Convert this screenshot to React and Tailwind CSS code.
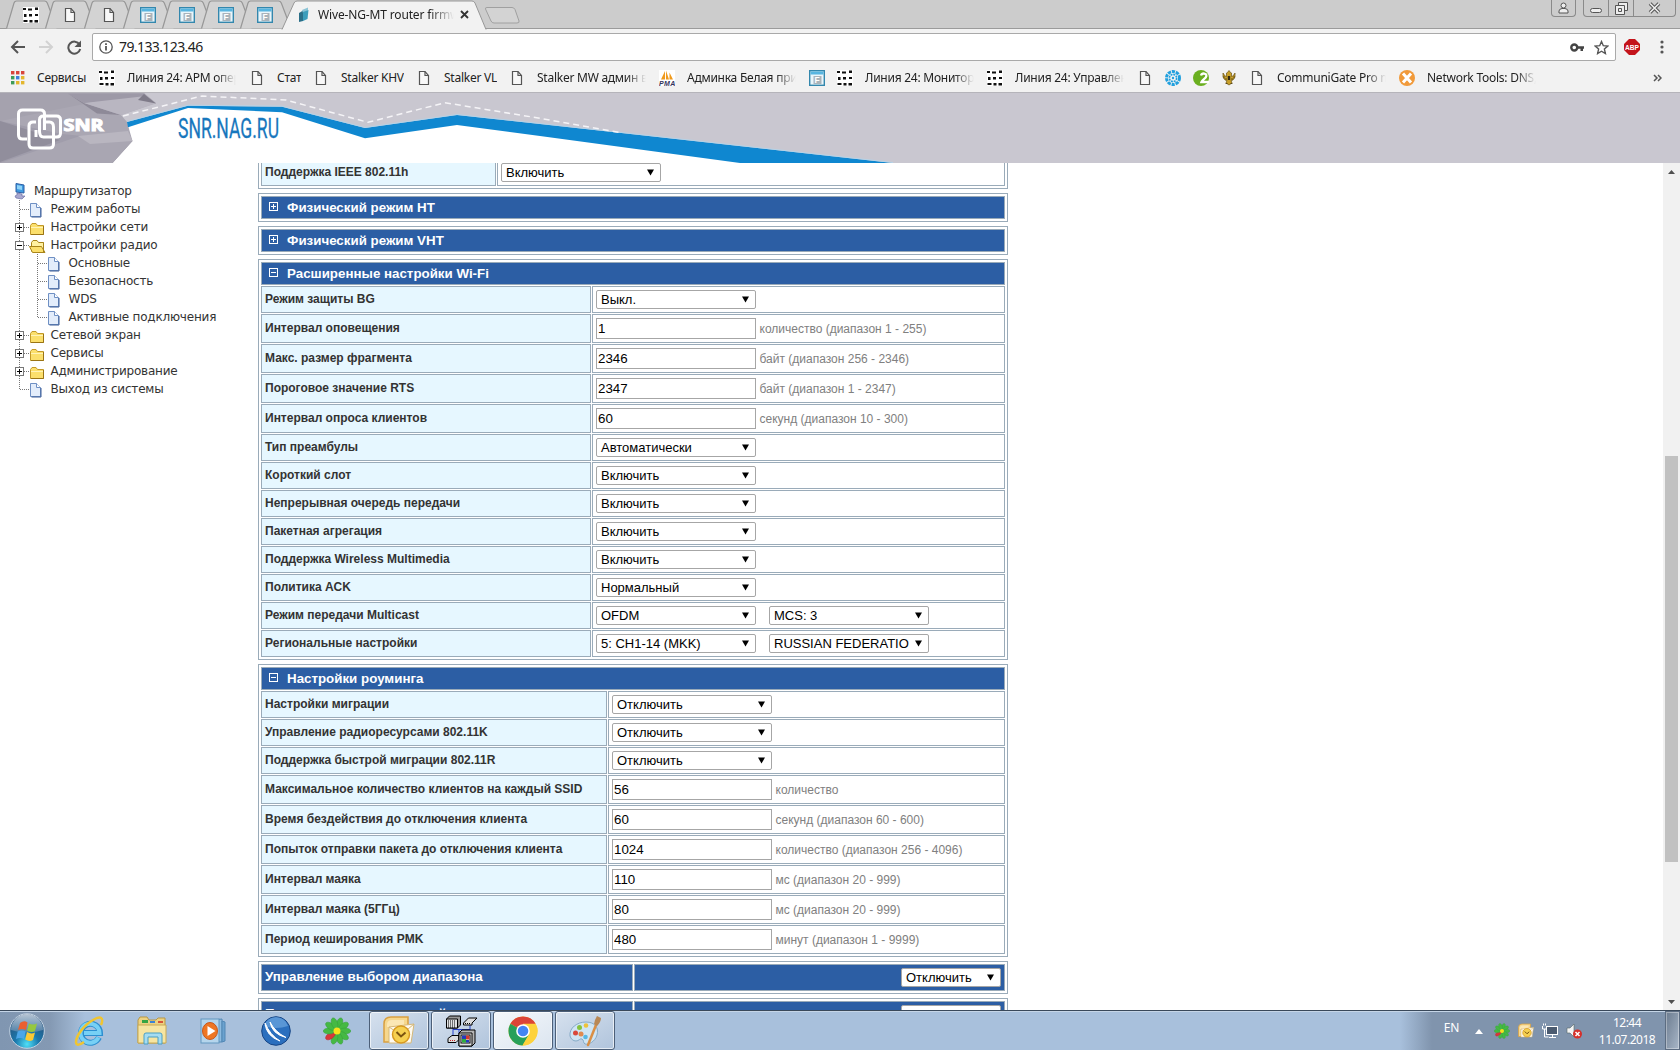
import { useState } from 'react';

const BOOKMARKS = [
  { icon: 'apps', label: 'Сервисы', width: 'w-[90px]' },
  { icon: 'dots', label: 'Линия 24: АРМ операт', width: 'w-[150px]', fade: true },
  { icon: 'page', label: 'Стат', width: 'w-[64px]' },
  { icon: 'page', label: 'Stalker KHV', width: 'w-[103px]' },
  { icon: 'page', label: 'Stalker VL', width: 'w-[93px]' },
  { icon: 'page', label: 'Stalker MW админ вх', width: 'w-[150px]', fade: true },
  { icon: 'pma', label: 'Админка Белая прив', width: 'w-[150px]', fade: true },
  { icon: 'form', width: 'w-[28px]' },
  { icon: 'dots', label: 'Линия 24: Монитори', width: 'w-[150px]', fade: true },
  { icon: 'dots', label: 'Линия 24: Управлени', width: 'w-[150px]', fade: true },
  { icon: 'page', width: 'w-[28px]' },
  { icon: 'blue', width: 'w-[28px]' },
  { icon: 'green', width: 'w-[28px]' },
  { icon: 'eagle', width: 'w-[28px]' },
  { icon: 'page', label: 'CommuniGate Pro ma', width: 'w-[150px]', fade: true },
  { icon: 'orange', label: 'Network Tools: DNS,I', width: 'w-[150px]', fade: true },
];

const TREE = [
  { label: 'Режим работы', level: 1, icon: 'page' },
  { label: 'Настройки сети', level: 1, icon: 'folder', toggle: '+' },
  { label: 'Настройки радио', level: 1, icon: 'open', toggle: '-' },
  { label: 'Основные', level: 2, icon: 'page' },
  { label: 'Безопасность', level: 2, icon: 'page' },
  { label: 'WDS', level: 2, icon: 'page' },
  { label: 'Активные подключения', level: 2, icon: 'page', last: true },
  { label: 'Сетевой экран', level: 1, icon: 'folder', toggle: '+' },
  { label: 'Сервисы', level: 1, icon: 'folder', toggle: '+' },
  { label: 'Администрирование', level: 1, icon: 'folder', toggle: '+' },
  { label: 'Выход из системы', level: 1, icon: 'page', last: true },
];

const WIFI_ROWS = [
  { label: 'Режим защиты BG', selects: ['Выкл.'] },
  { label: 'Интервал оповещения', value: '1', hint: 'количество (диапазон 1 - 255)' },
  { label: 'Макс. размер фрагмента', value: '2346', hint: 'байт (диапазон 256 - 2346)' },
  { label: 'Пороговое значение RTS', value: '2347', hint: 'байт (диапазон 1 - 2347)' },
  { label: 'Интервал опроса клиентов', value: '60', hint: 'секунд (диапазон 10 - 300)' },
  { label: 'Тип преамбулы', selects: ['Автоматически'] },
  { label: 'Короткий слот', selects: ['Включить'] },
  { label: 'Непрерывная очередь передачи', selects: ['Включить'] },
  { label: 'Пакетная агрегация', selects: ['Включить'] },
  { label: 'Поддержка Wireless Multimedia', selects: ['Включить'] },
  { label: 'Политика ACK', selects: ['Нормальный'] },
  { label: 'Режим передачи Multicast', selects: ['OFDM', 'MCS: 3'] },
  { label: 'Региональные настройки', selects: ['5: CH1-14 (MKK)', 'RUSSIAN FEDERATIO'] },
];

const ROAMING_ROWS = [
  { label: 'Настройки миграции', selects: ['Отключить'] },
  { label: 'Управление радиоресурсами 802.11K', selects: ['Отключить'] },
  { label: 'Поддержка быстрой миграции 802.11R', selects: ['Отключить'] },
  { label: 'Максимальное количество клиентов на каждый SSID', value: '56', hint: 'количество' },
  { label: 'Время бездействия до отключения клиента', value: '60', hint: 'секунд (диапазон 60 - 600)' },
  { label: 'Попыток отправки пакета до отключения клиента', value: '1024', hint: 'количество (диапазон 256 - 4096)' },
  { label: 'Интервал маяка', value: '110', hint: 'мс (диапазон 20 - 999)' },
  { label: 'Интервал маяка (5ГГц)', value: '80', hint: 'мс (диапазон 20 - 999)' },
  { label: 'Период кеширования PMK', value: '480', hint: 'минут (диапазон 1 - 9999)' },
];

/* ---------- Small icons ---------- */

const PageIcon = () => (
  <svg width="16" height="16" viewBox="0 0 16 16" fill="#f8f8f8" stroke="#555" strokeWidth="1.2">
    <path d="M3.500 1.500h5.500l3.500 4v9h-9z" />
    <path d="M9 1.500v4h3.500" fill="none" />
  </svg>
);

const DotsIcon = () => (
  <svg width="16" height="16" viewBox="0 0 16 16">
    <rect width="16" height="16" fill="#fff" />
    <g fill="#111">
      <rect x="0" y="1" width="3" height="2" /><rect x="5" y="1.5" width="4" height="2" /><rect x="12" y="0.5" width="3" height="2.5" />
      <rect x="1" y="7" width="2.5" height="3" /><rect x="6" y="7" width="3" height="2.5" /><rect x="12" y="7" width="3" height="2" />
      <rect x="0.5" y="13" width="4" height="2" /><rect x="6.5" y="13" width="3" height="2.5" /><rect x="11.5" y="13" width="3.5" height="2.5" />
    </g>
  </svg>
);

const FormIcon = () => (
  <svg width="16" height="16" viewBox="0 0 16 16">
    <rect x="0.7" y="0.7" width="14.6" height="14.6" fill="#e9f5fb" stroke="#3387ad" strokeWidth="1.4" />
    <rect x="1.5" y="1.5" width="13" height="3" fill="#58b5e0" />
    <rect x="4.5" y="6" width="8" height="8" fill="#a9b3ba" />
    <text x="5.6" y="13" fontSize="8.5" fontWeight="700" fill="#fff" fontFamily="Liberation Sans, sans-serif">F</text>
  </svg>
);

const BookmarkIcon = ({ name }) => {
  if (name === 'page') return <PageIcon />;
  if (name === 'dots') return <DotsIcon />;
  if (name === 'form') return <FormIcon />;
  if (name === 'apps') {
    const colors = ['#d8443a', '#d8443a', '#d8443a', '#3d9b57', '#3f7fdc', '#e3b62d', '#3d9b57', '#e3b62d', '#e3b62d'];
    return (
      <svg width="16" height="16" viewBox="0 0 16 16">
        {colors.map((c, i) => (
          <rect key={i} x={2 + (i % 3) * 5} y={1 + Math.floor(i / 3) * 5} width="3.4" height="3.4" fill={c} />
        ))}
      </svg>
    );
  }
  if (name === 'pma') {
    return (
      <svg width="16" height="16" viewBox="0 0 16 16">
        <rect width="16" height="16" fill="#fff" />
        <path d="M2 9.5L6 1v8.5zM7 9.5V0.5l3 9zM10.5 9.5V2.5L14 9.5z" fill="#f09a1c" />
        <text x="0" y="16" fontSize="7" fontWeight="700" fontStyle="italic" fill="#33335c" textLength="16" fontFamily="Liberation Sans, sans-serif">PMA</text>
      </svg>
    );
  }
  if (name === 'blue') {
    return (
      <svg width="16" height="16" viewBox="0 0 16 16" fill="none" stroke="#22a0de">
        <circle cx="8" cy="8" r="6.5" strokeWidth="3" strokeDasharray="3.2 0.9" />
        <circle cx="8" cy="8" r="3.6" strokeWidth="1.6" strokeDasharray="2 0.8" />
        <circle cx="8" cy="8" r="1.2" fill="#22a0de" stroke="none" />
      </svg>
    );
  }
  if (name === 'green') {
    return (
      <svg width="16" height="16" viewBox="0 0 16 16">
        <circle cx="8" cy="8" r="8" fill="#6aaf1f" />
        <path d="M8 5.500C9 2.500 14 3 13.300 6.200C12.800 8.500 9.500 9.500 8.500 12H16" fill="none" stroke="#fff" strokeWidth="2.300" />
      </svg>
    );
  }
  if (name === 'eagle') {
    return (
      <svg width="16" height="16" viewBox="0 0 16 16">
        <path d="M2 3v4l2 3 2 0.500-1 2.500 3 2 3-2-1-2.500 2-0.500 2-3V3l-2 3-1.500 0.500L10.500 3 9.500 2.500 8 0.500 6.500 2.500 5.500 3l0 3.500L4 6z" fill="#c9a029" stroke="#6b5413" strokeWidth="0.700" />
        <path d="M3 6v2.500M13 6v2.500M5 8v2M11 8v2M4.500 13.500h2M9.500 13.500h2" stroke="#4c3b0d" strokeWidth="0.800" />
        <rect x="6.800" y="6" width="2.400" height="4" fill="#302812" />
      </svg>
    );
  }
  return (
    <svg width="16" height="16" viewBox="0 0 16 16">
      <circle cx="8" cy="8" r="8" fill="#f19a3a" />
      <path d="M4 3.6l8 8.8M12 3.6l-8 8.8" stroke="#fff" strokeWidth="3" />
    </svg>
  );
};

const TabShape = () => (
  <svg className="absolute left-0 top-0" width="52" height="29" viewBox="0 0 52 29">
    <path d="M0.500 28.500L8 3Q8.700 1 10.500 1H38.500Q40.500 1 41.300 3L51 28.500" fill="#d3d3d3" stroke="#979797" strokeWidth="1.200" />
  </svg>
);

/* ---------- Browser chrome ---------- */

const TabStrip = () => (
  <div className="flex h-[29px] shrink-0 items-start bg-[#cccccc] border-b border-[#9b9b9b] pl-[6px]">
    {['dots', 'page', 'page', 'form', 'form', 'form', 'form'].map((icon, i) => (
      <div key={i} className="relative h-[28px] w-[39px]">
        <TabShape />
        <div className="relative pl-[17px] pt-[7px]"><BookmarkIcon name={icon} /></div>
      </div>
    ))}
    <div className="relative flex h-[29px] w-[206px] items-center pl-[19px]">
      <svg className="absolute left-0 top-0" width="210" height="30" viewBox="0 0 210 30">
        <path d="M3 29.500L15 3Q16 1 18 1H193Q195 1 196 3L207 29.500" fill="#f2f2f2" stroke="#979797" />
      </svg>
      <svg className="relative" width="12" height="16" viewBox="0 0 12 16">
        <path d="M1 6l5-3v3l-1 8-4 1z" fill="#2b6f88" />
        <path d="M4 3l6-2.500v3L5 6z" fill="#8cc4d6" />
        <path d="M5 5l5.500-2-1 9-4.500 2z" fill="#3c9dbb" />
      </svg>
      <span className="relative ml-[8px] w-[136px] overflow-hidden whitespace-nowrap text-[12px] tracking-[-0.15px] text-[#222] [mask-image:linear-gradient(90deg,#000_82%,transparent)]">Wive-NG-MT router firmware</span>
      <svg className="relative ml-[6px]" width="9" height="9" viewBox="0 0 9 9" stroke="#333" strokeWidth="1.800">
        <path d="M1 1l7 7M8 1l-7 7" />
      </svg>
    </div>
    <svg className="mt-[7px] -ml-[1px]" width="36" height="17" viewBox="0 0 36 17">
      <path d="M3 0.500H28Q30 0.500 31 2.500L35 14Q35.500 16 33 16H10Q8 16 7 14L1.500 2Q1 0.500 3 0.500z" fill="#d3d3d3" stroke="#a0a0a0" />
    </svg>
    <div className="ml-auto mr-[4px] flex gap-[7px]">
      <div className="flex h-[17px] w-[25px] items-center justify-center rounded-b border border-t-0 border-[#8a8a8a]">
        <svg width="11" height="12" viewBox="0 0 11 12" fill="#eee" stroke="#555">
          <circle cx="5.500" cy="3.500" r="2.500" />
          <path d="M1 11V9q0-2 3-2.500h3q3 0.500 3 2.500v2z" />
        </svg>
      </div>
      <div className="flex h-[17px] w-[93px] rounded-b border border-t-0 border-[#8a8a8a]">
        <div className="flex w-[25px] items-center justify-center border-r border-[#8a8a8a]">
          <div className="mt-1 h-[5px] w-[12px] rounded-sm border border-[#555] bg-[#eee]" />
        </div>
        <div className="flex w-[25px] items-center justify-center border-r border-[#8a8a8a]">
          <svg width="13" height="13" viewBox="0 0 13 13" fill="#eee" stroke="#555">
            <path d="M3.500 0.500h9v8h-9z" /><path d="M0.500 3.500h9v9h-9z" /><path d="M3.500 6.500h3v3h-3z" />
          </svg>
        </div>
        <div className="flex flex-1 items-center justify-center">
          <svg width="13" height="12" viewBox="0 0 13 12">
            <path d="M2 1.500l9 9M11 1.500l-9 9" stroke="#555" strokeWidth="3.600" />
            <path d="M2 1.500l9 9M11 1.500l-9 9" stroke="#eee" strokeWidth="1.600" />
          </svg>
        </div>
      </div>
    </div>
  </div>
);

const Toolbar = () => (
  <div className="flex h-[35px] shrink-0 items-center bg-[#f2f2f2] pl-[10px] pt-[1px]">
    <svg width="16" height="14" viewBox="0 0 16 14" fill="none" stroke="#555" strokeWidth="2">
      <path d="M15 7H2M8 1L2 7l6 6" />
    </svg>
    <svg className="ml-[12px]" width="16" height="14" viewBox="0 0 16 14" fill="none" stroke="#d2d2d2" strokeWidth="2">
      <path d="M1 7h13M8 1l6 6-6 6" />
    </svg>
    <svg className="ml-[13px]" width="15" height="15" viewBox="0 0 15 15">
      <path d="M12.500 4.500A6 6 0 1 0 13.200 9" fill="none" stroke="#555" strokeWidth="2" />
      <path d="M14 0.500v6.500H7.500z" fill="#555" />
    </svg>
    <div className="ml-[10px] flex h-[28px] w-[1524px] items-center rounded-[2px] border border-[#a9a9a9] bg-white pl-[6px]">
      <svg width="14" height="14" viewBox="0 0 14 14" fill="none" stroke="#555" strokeWidth="1.300">
        <circle cx="7" cy="7" r="6.200" />
        <path d="M7 6v4.500M7 3.300v1.600" strokeWidth="1.800" />
      </svg>
      <span className="-mt-px ml-[6px] text-[14px] tracking-[-0.6px] text-[#222]">79.133.123.46</span>
      <svg className="ml-auto" width="14" height="9" viewBox="0 0 14 9">
        <circle cx="4.300" cy="4.500" r="3" fill="none" stroke="#444" strokeWidth="2.400" />
        <path d="M7.500 3.200H14v2.600h-1V8h-2.500V5.800h-3z" fill="#444" />
      </svg>
      <svg className="ml-[10px] mr-[6px]" width="15" height="15" viewBox="0 0 15 15" fill="none" stroke="#555" strokeWidth="1.400">
        <path d="M7.500 1.500l1.800 4.200 4.500 0.400-3.400 3 1 4.400-3.900-2.300-3.900 2.300 1-4.400-3.400-3 4.500-0.400z" />
      </svg>
    </div>
    <svg className="ml-[8px]" width="16" height="16" viewBox="0 0 16 16">
      <path d="M5 0h6l5 5v6l-5 5H5l-5-5V5z" fill="#c4141b" />
      <text x="1" y="11" fontSize="8" fontWeight="700" fill="#fff" textLength="14" lengthAdjust="spacingAndGlyphs" fontFamily="Liberation Sans, sans-serif">ABP</text>
    </svg>
    <svg className="ml-[20px]" width="4" height="14" viewBox="0 0 4 14" fill="#555">
      <circle cx="2" cy="2" r="1.600" /><circle cx="2" cy="7" r="1.600" /><circle cx="2" cy="12" r="1.600" />
    </svg>
  </div>
);

const BookmarksBar = () => (
  <div className="flex h-[29px] shrink-0 items-center border-b border-[#b5b4ba] bg-[#f2f2f2] pl-[9px] text-[12px] tracking-[-0.25px] text-[#222]">
    {BOOKMARKS.map((b, i) => (
      <div key={i} className={`flex shrink-0 items-center ${b.width}`}>
        <BookmarkIcon name={b.icon} />
        {b.label && (
          <span className={`ml-[12px] overflow-hidden whitespace-nowrap ${b.fade ? 'w-[109px] [mask-image:linear-gradient(90deg,#000_82%,transparent)]' : ''}`}>
            {b.label}
          </span>
        )}
      </div>
    ))}
    <svg className="ml-auto mr-[18px]" width="9" height="8" viewBox="0 0 9 8" fill="none" stroke="#555" strokeWidth="1.500">
      <path d="M1 1l3 3-3 3M5 1l3 3-3 3" />
    </svg>
  </div>
);

/* ---------- Router page ---------- */

const Banner = () => (
  <svg className="block shrink-0" width="1680" height="70" viewBox="0 93 1680 70">
    <rect x="0" y="93" width="1680" height="70" fill="#c9c7d0" />
    <path d="M112 163L132 141L127 125L188 107L282 110L365 133L457 120L540 130L815 163z" fill="#fff" />
    <path d="M0 93H144L156 103L121 115L127 122L132.500 141L112.500 163H0z" fill="#aaa7b3" />
    <path d="M0 93H68L84 104L0 121z" fill="#a5a2ae" />
    <path d="M68 93.500L84 103L121 115L97 113.500z" fill="#8e8a98" />
    <path d="M84 103L144 93.500L156 103.500L121 115z" fill="#b9b6c1" />
    <path d="M68 93.500H144L146 96L84 103z" fill="#9d99a7" />
    <path d="M144 94L156 103.500L138 100z" fill="#7f7b89" />
    <path d="M0 121L62 134L132 141L112.500 163H0z" fill="#a09dab" />
    <path d="M0 163L80 136L132.500 141L112.500 163z" fill="#a9a6b2" />
    <path d="M0 121L60 140L0 162z" fill="#918e9c" />
    <path d="M78 136L128 131L132.500 141L90 144z" fill="#b9b6c0" />
    <path d="M127 122L188 105.700L282 106.700L365 128L457 115L540 124L893 163H740L540 136L457 125L365 138.300L282 112.300L188 108L128 127.300z" fill="#0f87d0" />
    <path d="M127 121.500L188 105.200L282 106.200L365 127.500L457 114.500L540 123.500L893 162.500" fill="none" stroke="#b5d3e8" strokeWidth="1" />
    <path d="M123 116L202 96L286 100L368 122.300L445 102.700L540 118.300L619 132.300" fill="none" stroke="#f5f4f7" strokeWidth="1.500" strokeDasharray="6 4" />
    <g fill="none" stroke="#fff" strokeWidth="3">
      <path d="M27 139H22.500Q18.500 139 18.500 135V114Q18.500 110 22.500 110H40.500Q44.500 110 44.500 114V130" />
      <path d="M29 139V144Q29 148 33 148H49.500Q53.500 148 53.500 144V127Q53.500 122 49.500 122H44M36 122H33Q29 122 29 126V139" />
      <path d="M36 137V130M39.500 131V120Q39.500 116 43.500 116H56.500Q60.500 116 60.500 120V133Q60.500 137 56.500 137H43.500Q39.500 137 39.500 131" />
    </g>
    <text x="63.500" y="131" fontSize="15.500" fontWeight="700" fill="#fff" stroke="#fff" strokeWidth="1.100" textLength="40" lengthAdjust="spacingAndGlyphs" fontFamily="Open Sans, sans-serif">SNR</text>
    <text x="178" y="138" fontSize="28" fill="#1777bd" stroke="#1777bd" strokeWidth="0.300" textLength="101" lengthAdjust="spacingAndGlyphs" fontFamily="Roboto, sans-serif">SNR.NAG.RU</text>
  </svg>
);

const NodeIcon = ({ name }) => (
  <svg width="18" height="18" viewBox="0 0 18 18">
    {name === 'page' && (
      <g stroke="#6f90c4">
        <path d="M1.500 3.500h6l4 4v9h-10z" fill="#e3edfb" />
        <path d="M7.500 3.500v4h4" fill="#fff" />
        <path d="M12 8v9H2.500" stroke="#3e5f97" fill="none" />
      </g>
    )}
    {name === 'folder' && (
      <g stroke="#c39a2a">
        <path d="M1.500 7.500l1.500-2h4l1.500 2h6v9h-13z" fill="#fbdf6c" />
        <path d="M2 9.500h12" stroke="#fff3b8" />
        <path d="M2 16.500h12.500V8" stroke="#9a7415" fill="none" />
      </g>
    )}
    {name === 'open' && (
      <g stroke="#a88419">
        <path d="M2.500 15.500V6.500l1.500-2h4l1.500 2h5v4" fill="#fff1a0" />
        <path d="M0.500 10.500h12l3.500 6h-12.500z" fill="#fbdf6c" />
        <path d="M14.500 6.500v10" fill="none" />
      </g>
    )}
    {name === 'root' && (
      <g>
        <path d="M5 1.500l8 1.500v8L5 10z" fill="#3f9ae0" stroke="#2b5ea5" />
        <path d="M6 3l5 1v4l-5-1z" fill="#8fd3f8" />
        <path d="M6 11l5 1v2h3l-3 3-6-1-1-2 2-1z" fill="#a9a8cf" stroke="#6c6fa5" strokeWidth="0.700" />
      </g>
    )}
  </svg>
);

const JoinLine = ({ toggle, last, straight }) => (
  <svg width="18" height="18" viewBox="0 0 18 18" fill="none" stroke="#777">
    <path d={last ? 'M8.500 0v10' : 'M8.500 0v18'} strokeDasharray="1 1" />
    {!straight && <path d="M9 9.500h9" strokeDasharray="1 1" />}
    {toggle && (
      <g>
        <rect x="4.500" y="5.500" width="8" height="8" fill="#fff" stroke="#777" />
        <path d={toggle === '+' ? 'M6 9.500h5M8.500 7v5' : 'M6 9.500h5'} stroke="#000" />
      </g>
    )}
  </svg>
);

const Sidebar = () => (
  <div className="w-[258px] shrink-0 pl-[11px] pt-[19px] font-['DejaVu_Sans',sans-serif] text-[12px] tracking-[-0.2px] text-[#333]">
    <div className="flex h-[18px] items-center">
      <NodeIcon name="root" />
      <span className="ml-[5px] whitespace-nowrap tracking-[-0.3px]">Маршрутизатор</span>
    </div>
    {TREE.map((n) => (
      <div key={n.label + n.level} className="flex h-[18px] items-center">
        {n.level === 2 && <JoinLine straight />}
        <JoinLine toggle={n.toggle} last={n.last} />
        <NodeIcon name={n.icon} />
        <span className="ml-[3.5px] whitespace-nowrap">{n.label}</span>
      </div>
    ))}
  </div>
);

const SelectBox = ({ text, width = 'w-[160px]' }) => (
  <button className={`flex h-[19px] shrink-0 items-center justify-between rounded-[2px] border border-[#a6a6a6] bg-white pl-[4px] pr-[6px] text-[13px] leading-[17px] text-black ${width}`}>
    <span className="whitespace-nowrap">{text}</span>
    <svg width="7" height="7" viewBox="0 0 7 7"><path d="M0 0.500h7L3.500 6.500z" fill="#000" /></svg>
  </button>
);

const Group = ({ children }) => (
  <div className="flex w-[750px] flex-col gap-px border border-[#9aabb9] p-[2px]">{children}</div>
);

const GroupTitle = ({ open, onClick, children }) => (
  <div onClick={onClick} className="flex h-[23px] items-center border border-[#9aabb9] bg-[#2c5ea4] pl-[7px] text-[13.33px] font-bold text-white">
    <svg className="-mt-[2px]" width="9" height="9" viewBox="0 0 9 9" fill="none" stroke="#fff">
      <rect x="0.500" y="0.500" width="8" height="8" />
      <path d={open ? 'M2 4.500h5' : 'M2 4.500h5M4.500 2v5'} />
    </svg>
    <span className="ml-[9px]">{children}</span>
  </div>
);

const Row = ({ row, labelWidth }) => (
  <div className={`flex gap-px ${row.selects ? 'h-[27px]' : 'h-[29px]'}`}>
    <div className={`flex shrink-0 items-center whitespace-nowrap border border-[#9aabb9] bg-[#e6f7ff] pb-[2px] pl-[3px] text-[12px] font-bold text-[#333] ${labelWidth}`}>
      {row.label}
    </div>
    <div className="flex flex-1 items-center border border-[#9aabb9] pl-[3px]">
      {row.selects ? (
        <div className="flex gap-[13px]">
          {row.selects.map((s) => <SelectBox key={s} text={s} />)}
        </div>
      ) : (
        <>
          <input defaultValue={row.value} className="h-[21px] w-[160px] border border-[#a6a6a6] bg-white px-[1px] text-[13.33px] text-black outline-none" />
          <span className="ml-[3.5px] text-[12px] text-[#808080]">{row.hint}</span>
        </>
      )}
    </div>
  </div>
);

const SwitchRow = ({ label, value }) => (
  <Group>
    <div className="flex h-[27px] gap-px text-[13.33px] font-bold text-white">
      <div className="flex w-[372px] items-center border border-[#9aabb9] bg-[#2c5ea4] pb-px pl-[3px]">{label}</div>
      <div className="flex flex-1 items-center justify-end border border-[#9aabb9] bg-[#2c5ea4] pr-[3px] font-normal">
        <SelectBox text={value} width="w-[100px]" />
      </div>
    </div>
  </Group>
);

const Settings = () => {
  const [wifiOpen, setWifiOpen] = useState(true);
  const [roamingOpen, setRoamingOpen] = useState(true);

  return (
    <div className="flex-1 overflow-hidden font-['Liberation_Sans',Arial,sans-serif]">
      <div className="-mt-[7px] flex flex-col gap-[4px]">
        <Group>
          <Row row={{ label: 'Поддержка IEEE 802.11h', selects: ['Включить'] }} labelWidth="w-[235px]" />
        </Group>
        <Group><GroupTitle>Физический режим HT</GroupTitle></Group>
        <Group><GroupTitle>Физический режим VHT</GroupTitle></Group>
        <Group>
          <GroupTitle open={wifiOpen} onClick={() => setWifiOpen(!wifiOpen)}>Расширенные настройки Wi-Fi</GroupTitle>
          {wifiOpen && WIFI_ROWS.map((r) => <Row key={r.label} row={r} labelWidth="w-[330px]" />)}
        </Group>
        <Group>
          <GroupTitle open={roamingOpen} onClick={() => setRoamingOpen(!roamingOpen)}>Настройки роуминга</GroupTitle>
          {roamingOpen && ROAMING_ROWS.map((r) => <Row key={r.label} row={r} labelWidth="w-[346px]" />)}
        </Group>
        <SwitchRow label="Управление выбором диапазона" value="Отключить" />
        <SwitchRow label="Периодичность включений" value="Отключить" />
      </div>
    </div>
  );
};

const Scrollbar = () => (
  <div className="flex w-[17px] shrink-0 flex-col items-center bg-[#f1f1f1] pb-[6px] pt-[7px]">
    <svg width="7" height="4" viewBox="0 0 7 4"><path d="M0 4L3.500 0L7 4z" fill="#505050" /></svg>
    <div className="mt-[282px] h-[406px] w-[13px] bg-[#c1c1c1]" />
    <svg className="mt-auto" width="7" height="4" viewBox="0 0 7 4"><path d="M0 0h7L3.500 4z" fill="#505050" /></svg>
  </div>
);

/* ---------- Taskbar ---------- */

const StartOrb = () => (
  <svg width="36" height="36" viewBox="0 0 36 36">
    <defs>
      <radialGradient id="orb" cx="50%" cy="88%" r="85%">
        <stop offset="0" stopColor="#4fe0f7" /><stop offset="0.4" stopColor="#1b78ad" /><stop offset="1" stopColor="#2b4a70" />
      </radialGradient>
      <linearGradient id="orbShine" x1="0" y1="0" x2="0" y2="1">
        <stop offset="0" stopColor="#e5edf5" /><stop offset="1" stopColor="#5f87ab" />
      </linearGradient>
    </defs>
    <circle cx="18" cy="18" r="17.300" fill="url(#orb)" stroke="#c2d2e2" />
    <path d="M2 17a16 16 0 0 1 32 0q-16 5-32 0z" fill="url(#orbShine)" opacity="0.750" />
    <path d="M11 10q4-3 7.500-0.500l-1.500 7.500q-4-2-8 0z" fill="#ea6030" />
    <path d="M20 10.500q4 2 8 0l-2 7.500q-4 2-8-0.500z" fill="#96c83e" />
    <path d="M8.700 18.500q4-2 8 0l-1.700 7.500q-4-2-8 0z" fill="#4ca6e8" />
    <path d="M18 19q4 2.500 8 0.500l-2 7.500q-4 2-7.800-0.500z" fill="#fcc934" />
  </svg>
);

const IeIcon = () => (
  <svg width="32" height="32" viewBox="0 0 32 32" fill="none">
    <path d="M25 22.500A9.500 9.500 0 1 1 26 18H10" stroke="#2d8fd0" strokeWidth="6" />
    <path d="M24.500 22.500A9.500 9.500 0 1 1 25.500 18H10" stroke="#77d0f5" strokeWidth="4" />
    <path d="M27 10C30 3 27 0 19 5C10 10 2 21 2 27C2 31 6 30 10 27" stroke="#f0c531" strokeWidth="2.500" />
  </svg>
);

const ExplorerIcon = () => (
  <svg width="32" height="30" viewBox="0 0 32 30">
    <path d="M2 4l2-3h7l2 3h7l2-2h7v25H2z" fill="#ecd282" stroke="#b99745" />
    <path d="M6 4h6v3H6z" fill="#37a544" /><path d="M14 5h5v2h-5z" fill="#3a84d5" /><path d="M22 5h5v2h-5z" fill="#d5553a" />
    <path d="M2 9h28v18H2z" fill="#f7e5a1" stroke="#c9aa55" />
    <path d="M8 28V19q0-2 2-2h14q2 0 2 2v9h-4v-7H12v7z" fill="#a5dcf1" stroke="#4b9fc4" />
  </svg>
);

const PlayerIcon = () => (
  <svg width="28" height="28" viewBox="0 0 28 28">
    <path d="M13 3l9-1v23h-9z" fill="#8fbce0" stroke="#5288b5" />
    <path d="M22 4l3 1v19l-3 1z" fill="#6ba2cf" stroke="#5288b5" />
    <rect x="1" y="2" width="18" height="24" fill="#b5d5ec" stroke="#6397c0" />
    <ellipse cx="10" cy="14" rx="7.500" ry="8.500" fill="#ee7623" stroke="#c9581a" />
    <path d="M7.500 9l8 5-8 5z" fill="#fff" />
  </svg>
);

const BlueDiscIcon = () => (
  <svg width="30" height="30" viewBox="0 0 30 30">
    <circle cx="15" cy="15" r="14.300" fill="#2b6fbe" stroke="#174585" />
    <path d="M3 10a12.500 12.500 0 0 1 24 0q-12 4-24 0z" fill="#6ea6e0" opacity="0.700" />
    <path d="M4 7Q5 20 19 25Q9 19 4 7zM9 6Q11 18 25 21.500Q14 16 9 6z" fill="#fff" stroke="#fff" />
  </svg>
);

const FlowerIcon = ({ size }) => (
  <svg width={size} height={size} viewBox="0 0 28 28">
    {[18, 54, 90, 126, 162, 198, 234, 270, 306, 342].map((a) => (
      <ellipse key={a} cx="14" cy="6" rx="3" ry="5.700" fill={a === 234 ? '#d8373a' : '#45b944'} stroke={a === 234 ? '#b5292c' : '#35a036'} strokeWidth="0.500" transform={`rotate(${a} 14 14)`} />
    ))}
    <circle cx="14" cy="14" r="3.500" fill="#f7e21b" />
  </svg>
);

const OutlookIcon = ({ size }) => (
  <svg width={size} height={size} viewBox="0 0 32 32">
    <path d="M1 9q0-7 7-7h17v25H1z" fill="#f6d78d" stroke="#d9a040" strokeWidth="1.500" />
    <path d="M4 10q0-5 5-5h12v7H4z" fill="#fbe7b5" />
    <path d="M6 12l25-3-3 19H6z" fill="#fffaf0" stroke="#d5b878" />
    <path d="M6 12l12 8 13-11" fill="none" stroke="#d5b878" />
    <circle cx="18" cy="19.500" r="8.500" fill="#f6d050" stroke="#d79a22" strokeWidth="1.500" />
    <path d="M13.500 17l4.500 4.500 4.500-4" fill="none" stroke="#7a5310" strokeWidth="2" />
  </svg>
);

const NetMonitorIcon = () => (
  <svg width="32" height="32" viewBox="0 0 32 32" stroke="#000">
    <path d="M8 13v7M8 14.500h17M14 14v4M25 9v8" stroke="#2740c9" fill="none" />
    <path d="M1.500 4l3-3h11v9l-3 3h-11z" fill="#999" />
    <path d="M1.500 4h11v9h-11z" fill="#e2e2e2" />
    <path d="M3 6h8M3 8h8M3 10h8M3 12h8" strokeDasharray="1 1" />
    <path d="M18.500 8l5-5h8.500l-5 5v2h-8.500z" fill="#ddd" />
    <path d="M20 8.500h6" strokeDasharray="1 1" />
    <path d="M3 23.500l4-3h7v4l-3 3H3z" fill="#ddd" />
    <path d="M5 25.500h6" stroke="#c22" strokeDasharray="1 1" />
    <path d="M14 18l3-3h13v13l-3 3H14z" fill="#b5b5b5" />
    <path d="M14 18h13v13H14z" fill="#e2e2e2" />
    <rect x="16" y="20" width="9" height="8" fill="#fff" />
    <path d="M17 20.500h4v4h-4z" fill="#243bbd" stroke="none" /><path d="M21 20.500h3.500v4H21z" fill="#d23b2f" stroke="none" /><path d="M17 24h4v3.500h-4z" fill="#2fae3e" stroke="none" /><path d="M21 25h3v2.500h-3z" fill="#243bbd" stroke="none" />
  </svg>
);

const ChromeIcon = () => (
  <svg width="30" height="30" viewBox="0 0 30 30">
    <circle cx="15" cy="15" r="14.500" fill="#fdd23c" />
    <path d="M15 15L2.400 7.800A14.500 14.500 0 0 1 27.600 7.800H15z" fill="#dc4437" />
    <path d="M2.400 7.800A14.500 14.500 0 0 0 14.500 29.500L21 18.500L15 15z" fill="#27a05a" />
    <path d="M15 8H27.700A14.500 14.500 0 0 1 14.500 29.500L21 18.500z" fill="#fdd23c" />
    <circle cx="15" cy="15" r="6.800" fill="#fff" />
    <circle cx="15" cy="15" r="5.300" fill="#4384f3" />
  </svg>
);

const PaintIcon = () => (
  <svg width="34" height="32" viewBox="0 0 34 32">
    <path d="M2 21C1 13 9 7 18 7s13 6 11 13c-2 7-9 10-12 9-2-1-1-4-3-5s-3 2-6 2-5-2-6-5z" fill="#cfe5f4" stroke="#86aac6" />
    <circle cx="7.500" cy="18" r="2.500" fill="#d9483b" /><circle cx="11.500" cy="12.500" r="2.500" fill="#86c23f" /><circle cx="18" cy="10.500" r="2.300" fill="#eec23a" />
    <circle cx="13" cy="19" r="2.500" fill="#e08a50" /><circle cx="17.500" cy="22" r="2.300" fill="#55b8e6" />
    <path d="M28 10L20 30" stroke="#d98f45" strokeWidth="2.500" strokeLinecap="round" />
    <path d="M26 9q1-5 3-8l4 2q0 4-4 8z" fill="#b98855" />
  </svg>
);

const TaskButton = ({ active, children }) => (
  <div className={`flex h-[39px] w-[60px] items-center justify-center rounded-[3px] border border-[#4c5f78] shadow-[inset_0_0_0_1px_rgba(255,255,255,0.65)] ${active ? 'bg-gradient-to-br from-[#f5f8fb] to-[#dbe5f0]' : 'bg-gradient-to-br from-[#d6e1ee] to-[#b0c4dc]'}`}>
    {children}
  </div>
);

const Taskbar = () => (
  <div className="flex h-[40px] shrink-0 items-center border-t border-[#39485a] bg-[linear-gradient(90deg,#8096b1_0px,#8499b3_50px,#a8c0dc_85px,#a8c0dc_1400px,#8094ad_1432px,#8094ad_1680px)] shadow-[inset_0_1px_0_#c5d5e7]">
    <div className="flex w-[369px] shrink-0 items-center pl-[9px]">
      <StartOrb />
      <div className="ml-[29px] flex w-[32px] justify-center"><IeIcon /></div>
      <div className="ml-[29px] flex w-[34px] justify-center"><ExplorerIcon /></div>
      <div className="ml-[29px] flex w-[32px] justify-center"><PlayerIcon /></div>
      <div className="ml-[30px] flex w-[32px] justify-center"><BlueDiscIcon /></div>
      <div className="ml-[30px] flex w-[30px] justify-center"><FlowerIcon size={28} /></div>
    </div>
    <div className="flex gap-[2px]">
      <TaskButton><OutlookIcon size={32} /></TaskButton>
      <TaskButton><NetMonitorIcon /></TaskButton>
      <TaskButton active><ChromeIcon /></TaskButton>
      <TaskButton><PaintIcon /></TaskButton>
    </div>
    <div className="ml-auto flex h-full items-center text-white">
      <span className="-mt-[5px] text-[12px] tracking-[-0.3px]">EN</span>
      <svg className="ml-[16px] mt-[2px]" width="8" height="5" viewBox="0 0 8 5"><path d="M0 5L4 0L8 5z" fill="#fff" /></svg>
      <div className="ml-[11px] flex items-center gap-[8px]">
        <FlowerIcon size={16} />
        <OutlookIcon size={16} />
        <svg width="16" height="16" viewBox="0 0 16 16" fill="none" stroke="#fff">
          <rect x="4.500" y="3.500" width="11" height="8" fill="#4b5b70" />
          <path d="M7 14.500h7M10.500 12v2M0.500 3v3h4V3M1.500 0.500v2M3.500 0.500v2M2.500 6v8h4" />
        </svg>
        <svg width="16" height="16" viewBox="0 0 16 16">
          <path d="M1 5h3l4-4v13l-4-4H1z" fill="#f4f4f4" stroke="#566" strokeWidth="0.600" />
          <circle cx="11.500" cy="11" r="4.500" fill="#d62f2a" />
          <path d="M9.500 9l4 4M13.500 9l-4 4" stroke="#fff" strokeWidth="1.500" />
        </svg>
      </div>
      <div className="ml-[12px] w-[66px] whitespace-nowrap text-center text-[12px] leading-[17px] tracking-[-0.5px]">
        <div>12:44</div>
        <div>11.07.2018</div>
      </div>
      <div className="ml-[5px] h-full w-[15px] border border-[#5c6c81] bg-gradient-to-br from-[#6c7c90] to-[#a9b7c8] shadow-[inset_0_0_0_1px_rgba(255,255,255,0.35)]" />
    </div>
  </div>
);

const App = () => (
  <div className="flex h-[1050px] w-[1680px] flex-col overflow-hidden bg-white font-['Noto_Sans',sans-serif]">
    <TabStrip />
    <Toolbar />
    <BookmarksBar />
    <Banner />
    <div className="flex min-h-0 flex-1">
      <Sidebar />
      <Settings />
      <Scrollbar />
    </div>
    <Taskbar />
  </div>
);

export default App;
